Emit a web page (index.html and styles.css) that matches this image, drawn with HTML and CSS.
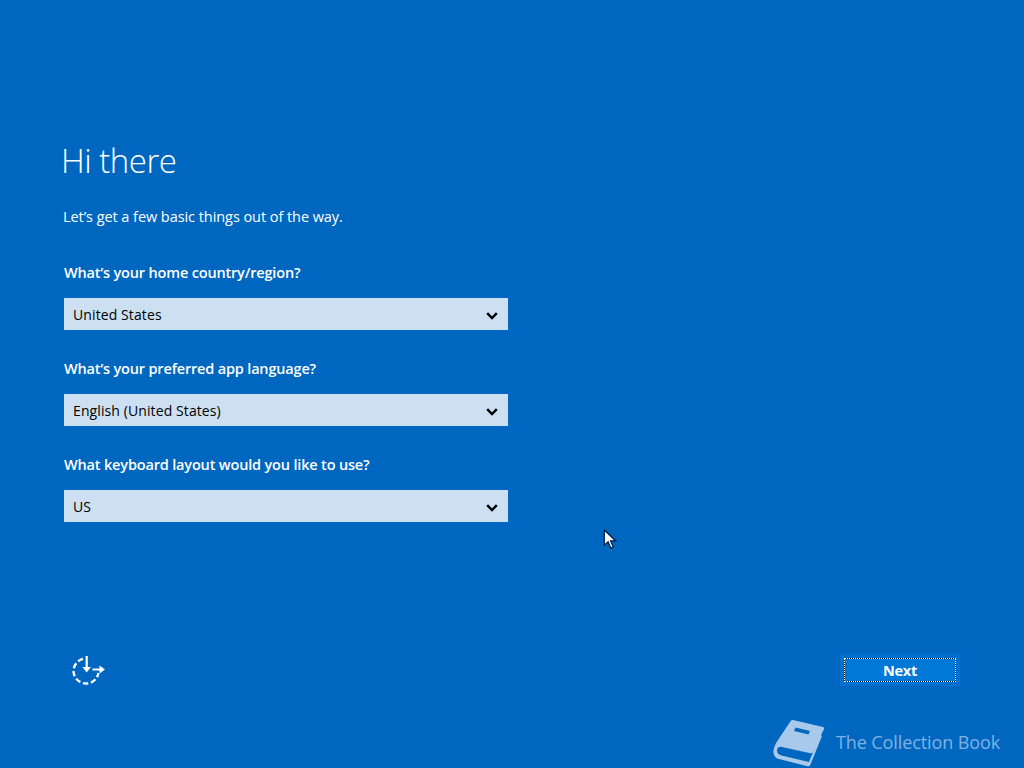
FILE: index.html
```html
<!DOCTYPE html>
<html lang="en">
<head>
<meta charset="utf-8">
<title>Hi there</title>
<link rel="stylesheet" href="styles.css">
</head>
<body>
<main class="screen">
  <section class="content">
    <h1 class="title">Hi there</h1>
    <p class="intro">Let’s get a few basic things out of the way.</p>
    <div class="fields">
      <div class="field">
        <label class="label">What’s your home country/region?</label>
        <div class="select"><span>United States</span>
          <svg class="chevron" viewBox="0 0 12 8"><path d="M1.2 1.2 6 6l4.8-4.8"/></svg></div>
      </div>
      <div class="field">
        <label class="label">What’s your preferred app language?</label>
        <div class="select"><span>English (United States)</span>
          <svg class="chevron" viewBox="0 0 12 8"><path d="M1.2 1.2 6 6l4.8-4.8"/></svg></div>
      </div>
      <div class="field">
        <label class="label">What keyboard layout would you like to use?</label>
        <div class="select"><span>US</span>
          <svg class="chevron" viewBox="0 0 12 8"><path d="M1.2 1.2 6 6l4.8-4.8"/></svg></div>
      </div>
    </div>
  </section>
  <footer class="footer">
    <svg class="ease" viewBox="0 0 36 32">
      <path class="ease-ring" d="M12 4.900A12.500 12.500 0 1 0 27.400 19"/>
      <path class="ease-line" d="M15.700 2v12M21.500 15.500H30"/>
      <path class="ease-head" d="M11.500 13h8.500l-4.300 5.500zM28.500 11.500v8l5.500-4z"/>
    </svg>
    <button class="next"><span class="next-focus">Next</span></button>
  </footer>
  <svg class="cursor" viewBox="0 0 14 22"><path d="M1 1v16l4-3.600 2.800 6.600 2.600-1.100-2.800-6.400H13z"/></svg>
  <div class="mark">
    <svg class="mark-icon" viewBox="0 0 52 48">
      <path class="mark-fill" d="M20 1 50 8c1 .3 1.300 1 1 2L40 33c-.6 1.200-1.400 1.500-2.500 1.200L9 28c-3 -.6-5 1-5 3.500s1.800 4.300 4.500 5L36 43l9-22 2-5 2 1-11.500 28.500c-.6 1.500-1.600 2-3 1.700L6 40c-4-1-6-4.500-5.500-8.500C1 27 3 24 5 21L17 3c.7-1.400 1.700-2.200 3-2z"/>
      <path class="mark-slot" d="M22.500 8.500 37 12l-1.500 3.500L21 12z"/>
    </svg>
    <span>The Collection Book</span>
  </div>
</main>
</body>
</html>
```
FILE: styles.css
```css
* { box-sizing: border-box; }
html, body { margin: 0; height: 100%; }
body { overflow: hidden; }
.screen {
  position: relative;
  width: 1024px;
  height: 768px;
  background: #0067c0;
  color: #fff;
  font-family: "Open Sans", "Noto Sans", sans-serif;
  display: flex;
  flex-direction: column;
}
.content {
  padding: 137px 0 0 64px;
  width: 508px;
  box-sizing: content-box;
  flex: 1;
}
.title {
  margin: 0 0 0 -3px;
  font-size: 33px;
  font-weight: 300;
  line-height: 48px;
  letter-spacing: -0.5px;
}
.intro {
  margin: 22px 0 0 -1px;
  font-size: 14.5px;
  line-height: 20px;
  letter-spacing: -0.06px;
}
.fields {
  margin-top: 36px;
  width: 444px;
  display: flex;
  flex-direction: column;
  gap: 29px;
}
.field { display: flex; flex-direction: column; gap: 15px; }
.label {
  display: block;
  height: 20px;
  font-size: 14.5px;
  font-weight: 600;
  line-height: 20px;
  letter-spacing: -0.17px;
  white-space: nowrap;
}
.select {
  height: 32px;
  background: #cce0f2;
  color: #000;
  display: flex;
  align-items: center;
  justify-content: space-between;
  padding: 0 10px 0 9px;
  font-size: 14px;
  letter-spacing: 0.1px;
}
.chevron { width: 12px; height: 8px; margin-top: 3px; }
.chevron path { fill: none; stroke: #000; stroke-width: 2.400; }
.footer {
  height: 114px;
  display: flex;
  justify-content: space-between;
  align-items: flex-start;
  padding: 0 64px 0 71px;
  flex: none;
}
.ease { width: 36px; height: 32px; }
.ease-ring { fill: none; stroke: #fff; stroke-width: 2.400; stroke-dasharray: 5.500 2.700; }
.ease-line { fill: none; stroke: #fff; stroke-width: 2.200; }
.ease-head { fill: #fff; }
.next {
  width: 120px;
  height: 32px;
  padding: 4px;
  border: 0;
  background: #0070d0;
  color: #fff;
  font: inherit;
  display: flex;
}
.next-focus {
  flex: 1;
  background: #0078d7;
  border: 1px solid #001428;
  outline: 1px dotted #fff;
  outline-offset: -1px;
  font-size: 14.5px;
  font-weight: 700;
  line-height: 24px;
  letter-spacing: -0.2px;
  text-align: center;
}
.cursor {
  position: absolute;
  left: 603px;
  top: 529px;
  width: 14px;
  height: 21px;
}
.cursor path { fill: #fff; stroke: #001a40; stroke-width: 1.300; }
.mark {
  position: absolute;
  left: 773px;
  top: 719px;
  display: flex;
  align-items: center;
  gap: 11px;
  color: #7fb2e3;
  font-size: 18px;
  letter-spacing: -0.1px;
}
.mark span { margin-top: -2px; }
.mark-icon { width: 52px; height: 48px; }
.mark-fill { fill: #a8c9ea; }
.mark-slot { fill: #0067c0; }
```
